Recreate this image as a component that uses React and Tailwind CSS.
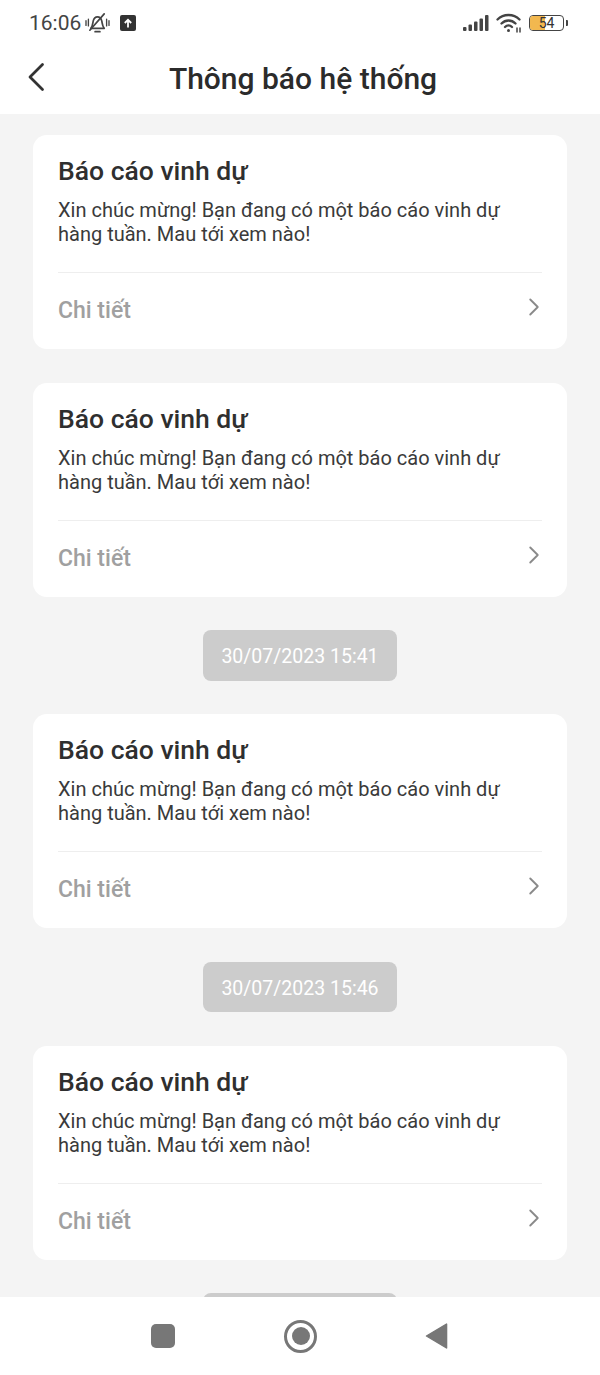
import { ChevronRight } from "lucide-react";

const Card = ({ className = "" }) => (
  <div className={`bg-white rounded-[14px] h-[214px] px-[25px] pt-[19px] shrink-0 ${className}`}>
    <h2 className="text-[26.500px] leading-[34px] font-medium text-[#2f2f2f]">Báo cáo vinh dự</h2>
    <p className="mt-[11px] text-[20px] leading-[23.500px] text-[#3a3a3a] h-[47px]">
      Xin chúc mừng! Bạn đang có một báo cáo vinh dự hàng tuần. Mau tới xem nào!
    </p>
    <div className="mt-[26px] border-t border-[#eeeeee] flex items-center justify-between h-[76px] pt-[2px]">
      <span className="text-[23px] font-medium text-[#a0a0a0]">Chi tiết</span>
      <ChevronRight className="w-[30px] h-[30px] text-[#8a8a8a] -mr-[7px] -mt-[10px]" strokeWidth={1.5} />
    </div>
  </div>
);

const TimePill = ({ time, className = "h-[51px]" }) => (
  <div className={`self-center w-[194px] shrink-0 rounded-[8px] bg-[#cccccc] text-white text-[19.500px] flex items-center justify-center pt-[3px] ${className}`}>
    {time}
  </div>
);

const StatusBar = () => (
  <div className="h-[46px] flex items-center justify-between pl-[29px] pr-[32px]">
    <div className="flex items-center">
      <span className="text-[21px] text-[#444] pt-[1px]">16:06</span>
      <svg viewBox="0 0 26 24" className="w-[25px] h-[23px] ml-[4px]" fill="none" stroke="#444" strokeWidth="1.800" strokeLinecap="round" strokeLinejoin="round">
        <path d="M6 17c2-2 2-5 2.500-7.500C9.200 6.500 11 5 13 5s3.800 1.500 4.500 4.500c.5 2.500.5 5 2.500 7.500z" />
        <path d="M10.500 20.500h5" />
        <path d="M5 19L20 2" />
        <path d="M1 9v5M3.500 7.500v7M22.500 7.500v7M25 9v5" strokeWidth="1.400" />
      </svg>
      <div className="ml-[10px] w-[16px] h-[16px] rounded-[2px] bg-[#333] flex items-center justify-center">
        <svg viewBox="0 0 12 12" className="w-[12px] h-[12px]" fill="none" stroke="#fff" strokeWidth="1.800">
          <path d="M6 10.500V3M2.800 6L6 2.800 9.200 6" />
        </svg>
      </div>
    </div>
    <div className="flex items-center">
      <svg viewBox="0 0 26 16" className="w-[26px] h-[16px]" fill="#444">
        <rect x="0" y="12" width="3.500" height="4" rx="1" />
        <rect x="5.500" y="9.500" width="3.500" height="6.500" rx="1" />
        <rect x="11" y="6.500" width="3.500" height="9.500" rx="1" />
        <rect x="16.500" y="3.500" width="3.500" height="12.500" rx="1" />
        <rect x="22" y="0" width="3.500" height="16" rx="1" />
      </svg>
      <svg viewBox="0 0 26 20" className="w-[26px] h-[20px] ml-[7px]" fill="none" stroke="#444" strokeWidth="2.300" strokeLinecap="round">
        <path d="M1.500 6.500C7.500 .5 17.500 .5 23.500 6.500" />
        <path d="M5.500 10.500c4-4 10-4 14 0" />
        <path d="M9 14c2-2 5-2 7 0" />
        <circle cx="12.500" cy="17.500" r="1.500" fill="#444" stroke="none" />
        <path d="M21 15v4M24 15v4" strokeWidth="1.500" />
      </svg>
      <div className="ml-[7px] w-[35px] h-[16px] rounded-[4px] border-[1.500px] border-[#444] overflow-hidden flex items-center relative">
        <div className="absolute left-0 top-0 bottom-0 w-[15px] bg-[#f2b84f]" />
        <span className="relative w-full text-center text-[14px] leading-none text-[#333]">54</span>
      </div>
      <div className="ml-[2px] w-[2px] h-[6px] rounded-r-[1px] bg-[#444]" />
    </div>
  </div>
);

const NavBar = () => (
  <div className="h-[78px] shrink-0 bg-white flex items-center justify-center gap-[108px]">
    <div className="w-[24px] h-[24px] rounded-[5px] bg-[#777777] -translate-x-[1px]" />
    <div className="w-[33px] h-[33px] rounded-full border-[3px] border-[#777777] flex items-center justify-center">
      <div className="w-[18px] h-[18px] rounded-full bg-[#777777]" />
    </div>
    <svg viewBox="0 0 24 28" className="w-[23px] h-[28px]" fill="#777777" stroke="#777777" strokeWidth="1.500" strokeLinejoin="round">
      <path d="M1.500 14L22.500 1.500v25z" />
    </svg>
  </div>
);

export default function App() {
  return (
    <div className="h-[1375px] w-[600px] flex flex-col bg-[#f4f4f4] overflow-hidden font-['Roboto',sans-serif]">
      <div className="bg-white h-[114px] shrink-0">
        <StatusBar />
        <div className="relative h-[64px] flex items-center justify-center">
          <svg viewBox="0 0 20 32" className="absolute left-[26px] top-[15px] w-[20px] h-[32px]" fill="none" stroke="#333" strokeWidth="2.800" strokeLinecap="round" strokeLinejoin="round">
            <path d="M16.500 3.500L4 16l12.500 12.500" />
          </svg>
          <h1 className="text-[30px] font-medium text-[#2b2b2b] ml-[6px]">Thông báo hệ thống</h1>
        </div>
      </div>
      <main className="flex-1 min-h-0 overflow-hidden px-[33px] pt-[21px] flex flex-col gap-[33px]">
        <Card />
        <Card className="mt-[1px]" />
        <TimePill time="30/07/2023 15:41" />
        <Card />
        <TimePill time="30/07/2023 15:46" className="h-[50px] mt-[1px]" />
        <Card className="mt-[1px]" />
        <TimePill />
      </main>
      <NavBar />
    </div>
  );
}
